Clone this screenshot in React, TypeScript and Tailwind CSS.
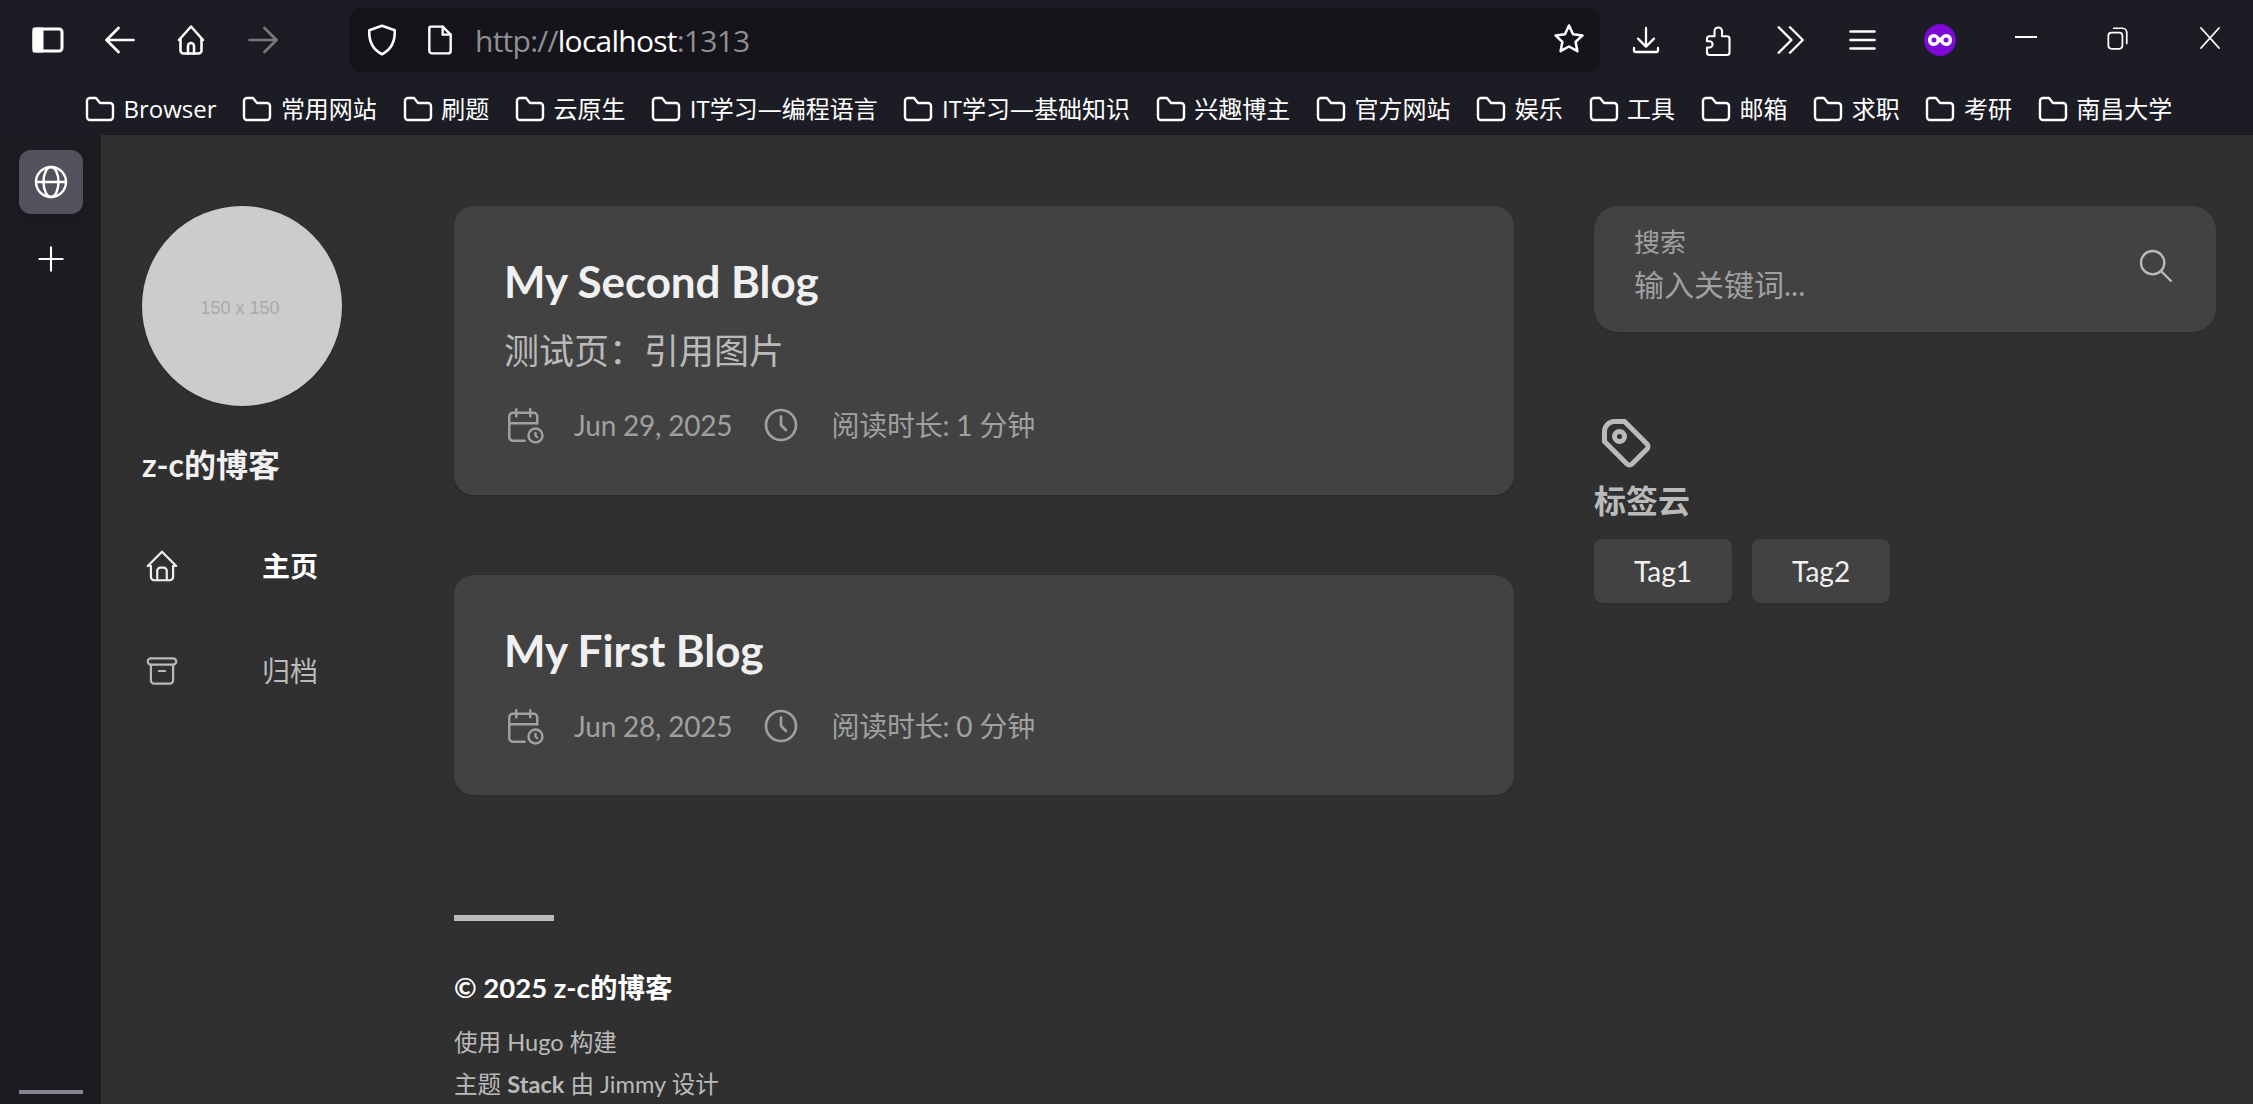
import React from "react";

const bookmarks = ["Browser", "常用网站", "刷题", "云原生", "IT学习—编程语言", "IT学习—基础知识", "兴趣博主", "官方网站", "娱乐", "工具", "邮箱", "求职", "考研", "南昌大学"];

const Ico = ({ className, sw = 2, children, vb = "0 0 24 24" }: { className: string; sw?: number; children: React.ReactNode; vb?: string }) => (
  <svg viewBox={vb} fill="none" stroke="currentColor" strokeWidth={sw} strokeLinecap="round" strokeLinejoin="round" className={className}>
    {children}
  </svg>
);

const Folder = () => (
  <Ico vb="0 0 30 26" sw={2.4} className="w-[30px] h-[26px] shrink-0 text-white">
    <path d="M2 5a3 3 0 0 1 3-3h6l4 5h10a3 3 0 0 1 3 3v11a3 3 0 0 1-3 3H5a3 3 0 0 1-3-3z" />
  </Ico>
);

const CalendarTime = () => (
  <Ico sw={1.4} className="w-[42px] h-[42px] shrink-0">
    <path d="M11.795 21h-6.795a2 2 0 0 1 -2 -2v-12a2 2 0 0 1 2 -2h12a2 2 0 0 1 2 2v4" />
    <circle cx="18" cy="18" r="4" />
    <path d="M15 3v4" />
    <path d="M7 3v4" />
    <path d="M3 11h16" />
    <path d="M18 16.496v1.504l1 1" />
  </Ico>
);

const Clock = () => (
  <Ico sw={1.6} className="w-[40px] h-[40px] shrink-0">
    <circle cx="12" cy="12" r="9" />
    <polyline points="12 7 12 12 15 15" />
  </Ico>
);

const Meta = ({ date, read }: { date: string; read: string }) => (
  <div className="flex items-center text-[28px] leading-[42px] text-[#a0a0a0]">
    <CalendarTime />
    <span className="ml-[28px] tracking-[-0.2px]">{date}</span>
    <span className="ml-[29px]"><Clock /></span>
    <span className="ml-[30px] tracking-[-0.2px]">{read}</span>
  </div>
);

const Toolbar = () => (
  <div className="h-[80px] flex items-center relative">
    <Ico vb="0 0 32 26" sw={3} className="w-[32px] h-[26px] ml-[32px] text-white">
      <rect x="2" y="2" width="28" height="22" rx="3" />
      <rect x="2" y="2" width="8" height="22" fill="currentColor" />
    </Ico>
    <Ico sw={1.8} className="w-[36px] h-[36px] ml-[38px] text-white">
      <path d="M21 12H4M11 4l-8 8 8 8" />
    </Ico>
    <Ico sw={1.7} className="w-[36px] h-[36px] ml-[35px] text-white">
      <path d="M4 12l8-9 8 9" />
      <path d="M5 11v8a2 2 0 0 0 2 2h10a2 2 0 0 0 2-2v-8" />
      <path d="M10 21v-5a2 2 0 0 1 4 0v5" />
    </Ico>
    <Ico sw={1.8} className="w-[36px] h-[36px] ml-[36px] text-[#77777c]">
      <path d="M3 12h17M13 4l8 8-8 8" />
    </Ico>
    <div className="ml-[69px] w-[1250px] h-[64px] rounded-[10px] bg-[#14141a] flex items-center relative shrink-0">
      <Ico sw={1.7} className="w-[36px] h-[36px] ml-[14px] text-white">
        <path d="M12 2.500l8.500 3c.3 7-1.600 12.500-8.500 16-6.900-3.500-8.800-9-8.500-16z" />
      </Ico>
      <Ico sw={1.8} className="w-[30px] h-[32px] ml-[25px] text-white" vb="0 0 22 24">
        <path d="M4 2h9l6 6v12a2 2 0 0 1-2 2H5a2 2 0 0 1-2-2V3a1 1 0 0 1 1-1z" />
        <path d="M13 2v6h6" />
      </Ico>
      <div className="ml-[20px] text-[30px] text-[#8f8f94] font-['Open_Sans',sans-serif] tracking-[-0.75px]">
        http://<span className="text-white">localhost</span>:1313
      </div>
      <Ico sw={1.7} className="w-[36px] h-[36px] absolute right-[13px] top-[13px] text-white">
        <path d="M12 3l2.700 5.800 6.300.8-4.600 4.300 1.200 6.200L12 17l-5.600 3.100 1.200-6.200L3 9.600l6.300-.8z" />
      </Ico>
    </div>
    <Ico sw={1.7} className="w-[32px] h-[36px] ml-[30px] text-white">
      <path d="M12 3v13M6 11l6 6 6-6M3 18v2a1 1 0 0 0 1 1h16a1 1 0 0 0 1-1v-2" />
    </Ico>
    <Ico sw={1.7} className="w-[30px] h-[36px] ml-[40px] text-white">
      <path d="M13 2a3 3 0 0 1 3 3v4h4a2 2 0 0 1 2 2v11a2 2 0 0 1-2 2H6a2 2 0 0 1-2-2v-4h2a2.500 2.500 0 0 0 0-5H4v-2a2 2 0 0 1 2-2h4V5a3 3 0 0 1 3-3z" />
    </Ico>
    <Ico sw={1.7} className="w-[34px] h-[34px] ml-[41px] text-white">
      <path d="M4 3l9 9-9 9M12 3l9 9-9 9" />
    </Ico>
    <Ico sw={2} className="w-[29px] h-[32px] ml-[41px] text-white">
      <path d="M2 5h20M2 12h20M2 19h20" />
    </Ico>
    <svg viewBox="0 0 32 32" className="w-[32px] h-[32px] ml-[47px]">
      <circle cx="16" cy="16" r="16" fill="#7e0ad6" />
      <path d="M4 16c0-4 3-6 6-6s5 3 6 4c1-1 3-4 6-4s6 2 6 6-3 6-6 6-5-3-6-4c-1 1-3 4-6 4s-6-2-6-6z" fill="#fff" />
      <circle cx="10" cy="16" r="2.500" fill="#7e0ad6" />
      <circle cx="22" cy="16" r="2.500" fill="#7e0ad6" />
    </svg>
    <div className="w-[22px] h-[2px] bg-white ml-[59px] -mt-[6px]" />
    <Ico sw={1.6} className="w-[26px] h-[26px] ml-[67px] -mt-[4px] text-white">
      <rect x="4" y="7" width="13" height="15" rx="3" />
      <path d="M9 3h8a4 4 0 0 1 4 4v10" />
    </Ico>
    <Ico sw={1.8} className="w-[28px] h-[24px] ml-[66px] -mt-[4px] text-white">
      <path d="M3 2l18 20M21 2L3 22" />
    </Ico>
  </div>
);

const Bookmarks = () => (
  <div className="h-[55px] flex items-start pl-[85px] gap-[25.8px] pt-[13px] text-[24px] leading-[32px] text-white font-['Open_Sans','Noto_Sans_CJK_SC',sans-serif]">
    {bookmarks.map((b) => (
      <div key={b} className="flex items-center gap-[8.5px] whitespace-nowrap">
        <Folder />
        <span>{b}</span>
      </div>
    ))}
  </div>
);

const Sidebar = () => (
  <aside className="w-[101px] shrink-0 bg-[#1b1b21] flex flex-col items-center pt-[15px] relative">
    <div className="w-[64px] h-[64px] rounded-[12px] bg-[#52525e] flex items-center justify-center text-white shadow-md">
      <Ico sw={1.6} className="w-[36px] h-[36px]">
        <circle cx="12" cy="12" r="10" />
        <path d="M2 12h20" />
        <ellipse cx="12" cy="12" rx="5" ry="10" />
      </Ico>
    </div>
    <Ico sw={1.8} className="w-[28px] h-[28px] mt-[31px] text-white">
      <path d="M12 2v20M2 12h20" />
    </Ico>
    <div className="absolute left-[19px] bottom-[10px] w-[64px] h-[4px] bg-[#85858f]" />
  </aside>
);

const LeftColumn = () => (
  <div className="w-[353px] shrink-0 pl-[41px]">
    <div className="w-[200px] h-[200px] rounded-full bg-[#cccccc] shadow-sm flex items-center justify-center pr-[4px] pt-[5px] text-[#a9a9a9] text-[18px] font-['Liberation_Sans',sans-serif]">
      150 x 150
    </div>
    <div className="mt-[37px] text-[32px] leading-[44px] font-bold text-[#f0f0f0]">z-c的博客</div>
    <div className="mt-[59px] flex items-center text-white font-bold text-[28px] h-[40px]">
      <Ico sw={1.4} className="w-[38px] h-[38px] ml-[1px] text-[#f0f0f0]">
        <polyline points="5 12 3 12 12 3 21 12 19 12" />
        <path d="M5 12v7a2 2 0 0 0 2 2h10a2 2 0 0 0 2 -2v-7" />
        <path d="M9 21v-6a2 2 0 0 1 2 -2h2a2 2 0 0 1 2 2v6" />
      </Ico>
      <span className="ml-[81px]">主页</span>
    </div>
    <div className="mt-[65px] flex items-center text-[#bababa] text-[28px] h-[40px]">
      <Ico sw={1.4} className="w-[38px] h-[38px] ml-[1px]">
        <rect x="3" y="4" width="18" height="4" rx="2" />
        <path d="M5 8v10a2 2 0 0 0 2 2h10a2 2 0 0 0 2 -2v-10" />
        <line x1="10" y1="12" x2="14" y2="12" />
      </Ico>
      <span className="ml-[81px]">归档</span>
    </div>
  </div>
);

const Center = () => (
  <div className="w-[1060px] shrink-0">
    <article className="h-[289px] rounded-[20px] bg-[#424242] shadow-sm px-[50px] pt-[45px]">
      <h2 className="text-[44px] leading-[60px] font-bold text-[#f0f0f0] tracking-[-0.1px]">My Second Blog</h2>
      <div className="text-[35px] leading-[50px] text-[#bababa] mt-[14px]">测试页：引用图片</div>
      <div className="mt-[29px]">
        <Meta date="Jun 29, 2025" read="阅读时长: 1 分钟" />
      </div>
    </article>
    <article className="h-[220px] mt-[80px] rounded-[20px] bg-[#424242] shadow-sm px-[50px] pt-[45px]">
      <h2 className="text-[44px] leading-[60px] font-bold text-[#f0f0f0] tracking-[-0.1px]">My First Blog</h2>
      <div className="mt-[25px]">
        <Meta date="Jun 28, 2025" read="阅读时长: 0 分钟" />
      </div>
    </article>
    <footer className="mt-[120px]">
      <div className="w-[100px] h-[6px] bg-[#bababa]" />
      <div className="mt-[47px] text-[27.5px] leading-[40px] font-bold text-white">© 2025 z-c的博客</div>
      <div className="mt-[13px] text-[23.6px] leading-[42px] text-[#bababa]">
        <div>使用 Hugo 构建</div>
        <div>主题 <b>Stack</b> 由 Jimmy 设计</div>
      </div>
    </footer>
  </div>
);

const RightColumn = () => (
  <div className="w-[622px] shrink-0 ml-[80px]">
    <div className="h-[126px] rounded-[24px] bg-[#424242] shadow-sm pl-[40px] pr-[40px] pt-[16px] flex justify-between">
      <div>
        <div className="text-[26px] leading-[40px] text-[#a0a0a0]">搜索</div>
        <div className="text-[30px] leading-[44px] text-[#a0a0a0]">输入关键词...</div>
      </div>
      <Ico sw={1.4} className="w-[40px] h-[40px] text-[#bababa] mt-[24px]">
        <circle cx="10" cy="10" r="7" />
        <line x1="21" y1="21" x2="15" y2="15" />
      </Ico>
    </div>
    <Ico sw={2} className="w-[60px] h-[60px] ml-[3px] text-[#bababa] mt-[82px]">
      <path d="M11 3L20 12a1.500 1.500 0 0 1 0 2L14 20a1.500 1.500 0 0 1 -2 0L3 11v-4a4 4 0 0 1 4 -4h4" />
      <circle cx="9" cy="9" r="2" />
    </Ico>
    <div className="text-[32px] leading-[44px] font-bold text-[#bababa] mt-[5px]">标签云</div>
    <div className="flex gap-[20px] mt-[16px]">
      <div className="h-[64px] px-[40px] rounded-[8px] bg-[#424242] shadow-sm flex items-center text-[28px] text-[#f0f0f0]">Tag1</div>
      <div className="h-[64px] px-[40px] rounded-[8px] bg-[#424242] shadow-sm flex items-center text-[28px] text-[#f0f0f0]">Tag2</div>
    </div>
  </div>
);

export default function App() {
  return (
    <div className="w-[2253px] h-[1104px] overflow-hidden flex flex-col bg-[#1c1c24] font-['Lato','Noto_Sans_CJK_SC',sans-serif]">
      <Toolbar />
      <Bookmarks />
      <div className="flex flex-1 min-h-0">
        <Sidebar />
        <main className="flex-1 bg-[#303030] pt-[71px] flex items-start overflow-hidden">
          <LeftColumn />
          <Center />
          <RightColumn />
        </main>
      </div>
    </div>
  );
}
